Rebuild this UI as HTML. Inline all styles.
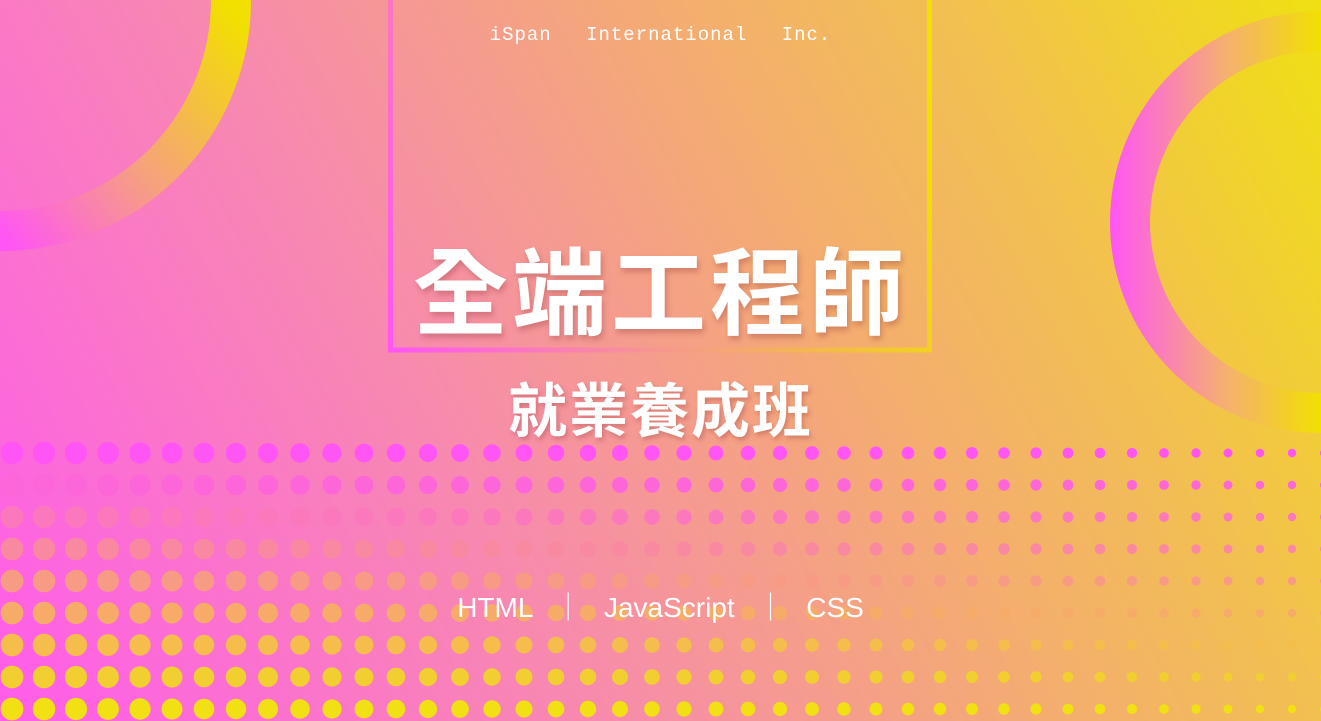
<!DOCTYPE html>
<html><head><meta charset="utf-8"><style>
html,body{margin:0;padding:0;}
body{width:1321px;height:721px;overflow:hidden;position:relative;
background:linear-gradient(62deg,#ff5cec 0%,#f78aae 35%,#f4a878 58%,#f2c050 78%,#f0e012 100%);}
svg{position:absolute;left:0;top:0;}
.t{position:absolute;left:0;width:1321px;text-align:center;color:#fff;}
</style></head><body>
<svg width="1321" height="721" id="s">
<defs>
<linearGradient id="g1" gradientUnits="userSpaceOnUse" x1="0" y1="235" x2="240" y2="20"><stop offset="0" stop-color="#ff55f5"/><stop offset="0.45" stop-color="#f6a080"/><stop offset="1" stop-color="#f2e000"/></linearGradient>
<linearGradient id="g2" gradientUnits="userSpaceOnUse" x1="1110" y1="222" x2="1321" y2="222"><stop offset="0" stop-color="#ff55f5"/><stop offset="0.55" stop-color="#f5b070"/><stop offset="1" stop-color="#f2e000"/></linearGradient>
<linearGradient id="g3" gradientUnits="userSpaceOnUse" x1="390" y1="350" x2="930" y2="150"><stop offset="0" stop-color="#ff55f5"/><stop offset="0.5" stop-color="#f5a080"/><stop offset="1" stop-color="#f2e000"/></linearGradient>
</defs>
<circle cx="0" cy="0" r="231" fill="none" stroke="url(#g1)" stroke-width="40"/>
<circle cx="1321" cy="222" r="191" fill="none" stroke="url(#g2)" stroke-width="40"/>
<rect x="390.5" y="-10" width="539" height="360" fill="none" stroke="url(#g3)" stroke-width="5"/>
<g id="dots"></g>
</svg>
<div class="t" style="top:24px;font:19px 'Liberation Mono',monospace;letter-spacing:1px;word-spacing:22px;">iSpan International Inc.</div>
<div class="t" style="top:218px;font:bold 95px 'Liberation Sans','Noto Sans CJK TC',sans-serif;letter-spacing:4px;text-shadow:2px 4px 6px rgba(150,60,60,.35);">全端工程師</div>
<div class="t" style="top:364px;font:bold 59px 'Liberation Sans','Noto Sans CJK TC',sans-serif;letter-spacing:2px;text-shadow:2px 3px 5px rgba(150,60,60,.35);">就業養成班</div>
<div class="t" style="top:586px;font:28px 'Liberation Sans','Noto Sans CJK TC',sans-serif;word-spacing:14px;">HTML ｜ JavaScript ｜ CSS</div>
<script>
var g=document.getElementById('dots'),h='';
var a=[255,85,245],b=[240,224,20];
for(var r=0;r<9;r++){var f=r/8;var c='rgb('+Math.round(a[0]+(b[0]-a[0])*f)+','+Math.round(a[1]+(b[1]-a[1])*f)+','+Math.round(a[2]+(b[2]-a[2])*f)+')';
for(var i=0;i<42;i++){var x=12+i*32;var rad=11.5-7.5*(x/1321);
h+='<circle cx="'+x+'" cy="'+(453+r*32)+'" r="'+rad.toFixed(1)+'" fill="'+c+'"/>';}}
g.innerHTML=h;
</script>
</body></html>
